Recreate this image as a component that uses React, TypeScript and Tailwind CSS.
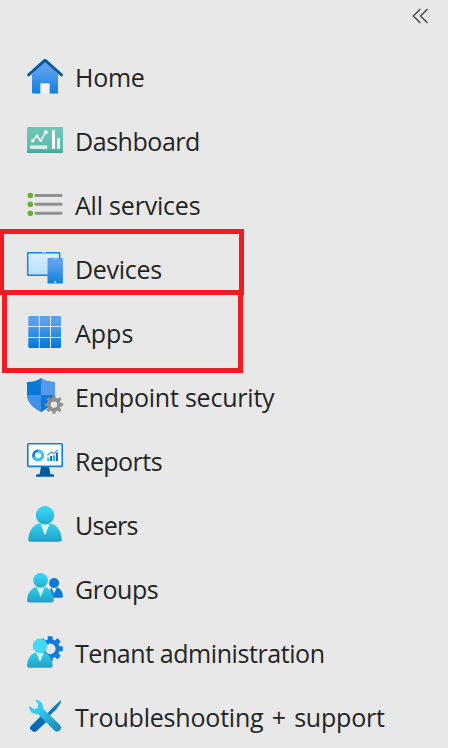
import type { ReactNode } from 'react';

const TEETH = [0, 45, 90, 135, 180, 225, 270, 315];

function Gear({ cx, cy, r, inner, fill, tooth }: { cx: number; cy: number; r: number; inner: number; fill: string; tooth: number }) {
  const body = r * 0.76;
  const mid = (body + inner) / 2;
  return (
    <g transform={`translate(${cx} ${cy})`}>
      <circle r={mid} fill="none" stroke={fill} strokeWidth={body - inner} />
      {TEETH.map((a) => (
        <rect key={a} x={-tooth / 2} y={-r} width={tooth} height={r - mid} rx={0.6} fill={fill} transform={`rotate(${a})`} />
      ))}
    </g>
  );
}

function Icon({ children }: { children: ReactNode }) {
  return (
    <svg viewBox="0 0 36 36" className="h-9 w-9 shrink-0 overflow-visible">
      {children}
    </svg>
  );
}

function Gradients() {
  return (
    <svg className="absolute h-0 w-0" aria-hidden="true">
      <defs>
        <linearGradient id="blue" x1="0" y1="0" x2="0" y2="1">
          <stop offset="0" stopColor="#5ea0ef" />
          <stop offset="0.2" stopColor="#5ea0ef" />
          <stop offset="1" stopColor="#0f80dc" />
        </linearGradient>
        <linearGradient id="apps" gradientUnits="userSpaceOnUse" x1="0" y1="1" x2="0" y2="33">
          <stop offset="0" stopColor="#5ea0ef" />
          <stop offset="0.2" stopColor="#589eed" />
          <stop offset="1" stopColor="#0078d4" />
        </linearGradient>
        <linearGradient id="teal" x1="0" y1="0" x2="0" y2="1">
          <stop offset="0" stopColor="#6fc6b9" />
          <stop offset="0.8" stopColor="#61bcae" />
          <stop offset="1" stopColor="#3da295" />
        </linearGradient>
        <linearGradient id="torso" x1="0" y1="0" x2="0" y2="1">
          <stop offset="0" stopColor="#32d0ef" />
          <stop offset="1" stopColor="#229fc5" />
        </linearGradient>
        <linearGradient id="head" x1="0" y1="0" x2="0" y2="1">
          <stop offset="0.2" stopColor="#32d4f5" />
          <stop offset="1" stopColor="#27a9cf" />
        </linearGradient>
        <linearGradient id="glass" x1="0" y1="0" x2="0" y2="1">
          <stop offset="0" stopColor="#d8f0fc" />
          <stop offset="1" stopColor="#b9defa" />
        </linearGradient>
        <linearGradient id="driver" gradientUnits="userSpaceOnUse" x1="33" y1="1" x2="4" y2="33">
          <stop offset="0" stopColor="#1c83bd" />
          <stop offset="1" stopColor="#0064b5" />
        </linearGradient>
        <linearGradient id="wrench" gradientUnits="userSpaceOnUse" x1="5" y1="2" x2="31" y2="32">
          <stop offset="0.25" stopColor="#32d0f3" />
          <stop offset="1" stopColor="#198ab3" />
        </linearGradient>
      </defs>
    </svg>
  );
}

const HomeIcon = () => (
  <Icon>
    <path d="M5 15 18 3l13 12v18.4q0 1.2-1.2 1.2h-7.4V24.5h-8.8v10.1H6.2Q5 34.6 5 33.4Z" fill="url(#blue)" />
    <path d="M16.8.2q1.2-1 2.4 0L35.7 15q.9 1-.2 2-1 .8-2 0L18 3.3 2.6 17q-1 .8-2 0-1-1-.2-2Z" fill="#005ba1" />
    <rect x="13.6" y="24.5" width="8.8" height="10.1" fill="#f2f2f2" />
  </Icon>
);

const DashboardIcon = () => (
  <Icon>
    <rect x="0" y="4" width="36" height="26" rx="1" fill="url(#teal)" />
    <path d="m5.7 17.5 4.2-4.4 3.8 4.7 5-8.5" fill="none" stroke="white" strokeWidth="1.5" />
    <g fill="white">
      <circle cx="5.7" cy="17.7" r="1.8" />
      <circle cx="10" cy="13" r="1.4" />
      <circle cx="13.7" cy="17.5" r="1.4" />
      <circle cx="18.8" cy="9.2" r="1.9" />
      <rect x="25" y="7.2" width="3" height="18.8" />
      <rect x="30" y="15" width="3" height="11" opacity="0.85" />
      <rect x="3.2" y="22.4" width="17" height="3.6" opacity="0.75" />
    </g>
  </Icon>
);

const ServicesIcon = () => (
  <Icon>
    {[8.5, 17.3, 26.3].map((y) => (
      <g key={y}>
        <circle cx="3.3" cy={y} r="2.8" fill="#6bb02a" />
        <rect x="7.5" y={y - 1.5} width="28" height="3" rx="1" fill="#919191" />
      </g>
    ))}
  </Icon>
);

const DevicesIcon = () => (
  <Icon>
    <rect x="0.7" y="1.7" width="32" height="22.6" rx="0.7" fill="url(#glass)" stroke="#1584db" strokeWidth="1.5" />
    <path d="M15 1.7h4" stroke="#9cd0fa" strokeWidth="1" />
    <rect x="20.5" y="7" width="15.4" height="25.6" rx="0.9" fill="url(#blue)" />
    <path d="M26.3 8.3h4" stroke="#b5d8fa" strokeWidth="0.9" />
    <circle cx="28.3" cy="31" r="0.9" fill="#e4f3ff" />
  </Icon>
);

const AppsIcon = () => (
  <Icon>
    <g fill="url(#apps)">
      <path d="M2.5 1h9.3v10H1.3V2.2Q1.3 1 2.5 1Z" />
      <path d="M12.8 1h10.2v10H12.8ZM24 1h8.8q1.2 0 1.2 1.2V11H24Z" />
      <path d="M1.3 12h10.5v10H1.3ZM12.8 12H23v10H12.8ZM24 12h10v10H24Z" />
      <path d="M1.3 23.1h10.5V33H2.5q-1.2 0-1.2-1.2ZM12.8 23.1H23V33H12.8ZM24 23.1h10v8.7q0 1.2-1.2 1.2H24Z" />
    </g>
  </Icon>
);

const SecurityIcon = () => (
  <Icon>
    <clipPath id="shield">
      <path d="M14-1C17 1.6 22 3 28 3v12.5C28 24 20 29.5 14 33 8 29.5 0 24 0 15.5V3C6 3 11 1.6 14-1Z" />
    </clipPath>
    <g clipPath="url(#shield)">
      <rect x="0" y="-1" width="28" height="35" fill="#0b78d6" />
      <rect x="14" y="-1" width="14" height="17" fill="#5599eb" />
      <rect x="0" y="16" width="14" height="18" fill="#3f92e6" />
      <rect x="14" y="16" width="14" height="18" fill="#0b78d6" />
    </g>
    <circle cx="27" cy="25.6" r="4" fill="#e9e9e9" />
    <Gear cx={27} cy={25.6} r={9.2} inner={3.2} tooth={3.2} fill="#8f8f8f" />
  </Icon>
);

const ReportsIcon = () => (
  <Icon>
    <path d="M14 24h8l1.5 7.2h3q.6.5.6 2.5H9q0-2 .6-2.5h3Z" fill="#005ba1" />
    <rect x="0.8" y="0.8" width="34.4" height="22.6" rx="0.7" fill="white" stroke="#0f80da" strokeWidth="1.6" />
    <circle cx="11" cy="12.4" r="4.5" fill="none" stroke="#0f7fd8" strokeWidth="2.8" />
    <path d="M11 7.9a4.5 4.5 0 1 1-4.2 6" fill="none" stroke="#32cdef" strokeWidth="2.8" />
    <path d="M20.2 14.4h2.2V18h-2.2Zm5.8-2.2h2V18h-2Z" fill="#32b8e4" />
    <path d="M23.2 13h2v5h-2Zm5.7-3.4h2V18h-2Z" fill="#0868b8" />
    <path d="m20.3 12.3 4.2-3.2 2.4 1.4L30.6 6.5" fill="none" stroke="#2996db" strokeWidth="1.1" />
  </Icon>
);

const UsersIcon = () => (
  <Icon>
    <path d="M12 16.5h12c7 2 10.3 8.8 10.8 15.8q.1 2.5-2.5 2.5H3.7q-2.6 0-2.5-2.5C1.8 25.3 5 18.5 12 16.5Z" fill="url(#torso)" />
    <path d="M13.3 16.6h9.4L18 28.5Z" fill="#d6f5fc" />
    <circle cx="18" cy="8.3" r="9.2" fill="url(#head)" />
  </Icon>
);

const GroupsIcon = () => (
  <Icon>
    <path d="M24 16.5h6c4 1.2 5.6 5 6 8.7q0 1.5-1.5 1.5H21Z" fill="#0d7bd6" />
    <path d="M24.3 16.5h5.5L27 22.4Z" fill="#dff2fd" />
    <circle cx="27.1" cy="12" r="5" fill="#0e78d4" />
    <path d="M8.8 16h9.5c5.5 1.8 8 7.3 8.5 13q0 2.6-2.2 2.6H2.2Q0 31.6 0 29c.6-5.7 3-11.2 8.8-13Z" fill="url(#torso)" />
    <path d="M9.7 16.2h7.8L13.6 26Z" fill="#d6f5fc" />
    <circle cx="13.6" cy="9.4" r="7.3" fill="url(#head)" />
  </Icon>
);

const TenantIcon = () => (
  <Icon>
    <Gear cx={23.2} cy={13.8} r={12.6} inner={5.4} tooth={5} fill="#0e7cda" />
    <path d="M8.3 17.5h9.2c5 1.8 7.6 7 8.2 12.7q0 2.5-2.2 2.5H2.2Q0 32.7 0 30.2c.6-5.7 3-10.9 8.3-12.7Z" fill="url(#torso)" />
    <path d="M9.2 17.5h7.6L13 27Z" fill="#d6f5fc" />
    <circle cx="13" cy="10.9" r="7.3" fill="#45d9f4" />
  </Icon>
);

const SupportIcon = () => (
  <Icon>
    <path d="m33.8 1.2.2 2.4-4.6 6.6-9.8 9.6-2.2-2.2 9.4-10Z" fill="url(#driver)" />
    <path d="m14.4 16.4 6 5.6-11.3 10.6q-1.7 1.1-3.3-.3L3.5 30.6q-1.3-1.7.2-3.3Z" fill="url(#driver)" />
    <path d="M8 1c5-.6 8.6 3.5 7.9 8.4L32.8 25.8q2.4 2.9.1 5.5-2.7 2.6-5.6.2L10.9 14.9C6 15.8 1.7 12 2.2 7l4.4 3 4-.7.7-4.4Z" fill="url(#wrench)" />
    <circle cx="30.2" cy="28.9" r="1.2" fill="#2796bb" />
  </Icon>
);

const ITEMS: { label: string; icon: ReactNode; spacing: string }[] = [
  { label: 'Home', icon: <HomeIcon />, spacing: 'tracking-[-0.25px]' },
  { label: 'Dashboard', icon: <DashboardIcon />, spacing: 'tracking-[-0.45px]' },
  { label: 'All services', icon: <ServicesIcon />, spacing: 'tracking-[-0.2px]' },
  { label: 'Devices', icon: <DevicesIcon />, spacing: 'tracking-[-0.3px]' },
  { label: 'Apps', icon: <AppsIcon />, spacing: 'tracking-[0px]' },
  { label: 'Endpoint security', icon: <SecurityIcon />, spacing: 'tracking-[-0.22px]' },
  { label: 'Reports', icon: <ReportsIcon />, spacing: 'tracking-[-0.55px]' },
  { label: 'Users', icon: <UsersIcon />, spacing: 'tracking-[-0.75px]' },
  { label: 'Groups', icon: <GroupsIcon />, spacing: 'tracking-[-0.45px]' },
  { label: 'Tenant administration', icon: <TenantIcon />, spacing: 'tracking-[-0.43px]' },
  { label: 'Troubleshooting + support', icon: <SupportIcon />, spacing: 'tracking-[-0.2px] [word-spacing:2px]' },
];

export default function App() {
  return (
    <div className="relative h-[748px] w-[450px] overflow-hidden bg-white font-['Open_Sans','Noto_Sans',sans-serif] text-[#242424]">
      <Gradients />
      <aside className="flex h-full w-[448px] flex-col bg-[#e8e8e8]">
        <header className="flex h-[45px] shrink-0 justify-end pt-2 pr-5">
          <button aria-label="Collapse" className="h-4 w-4">
            <svg viewBox="0 0 16 16" className="h-4 w-4" fill="none" stroke="#333333" strokeWidth="1.15">
              <path d="M8.3 1 1.3 8l7 7M15.5 1l-7 7 7 7" />
            </svg>
          </button>
        </header>
        <nav className="flex flex-col">
          {ITEMS.map(({ label, icon, spacing }) => (
            <a key={label} className="flex h-16 shrink-0 items-center pl-[27px]">
              {icon}
              <span className={`ml-3 text-[25px] leading-8 whitespace-nowrap ${spacing}`}>{label}</span>
            </a>
          ))}
        </nav>
      </aside>
      <div className="absolute top-[290px] left-[2px] h-[83px] w-[241px] border-[5px] border-[#ef1c24]" />
      <div className="absolute top-[229px] left-0 h-[66px] w-[244px] border-[5px] border-l-4 border-[#ef1c24]" />
    </div>
  );
}
